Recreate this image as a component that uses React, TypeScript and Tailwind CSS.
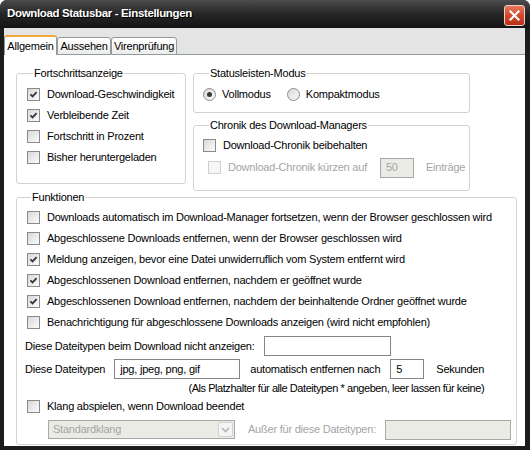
import React from 'react';

type BoxProps = { checked?: boolean; disabled?: boolean };

// 13px XP-style check box
function CheckBox({ checked, disabled }: BoxProps) {
  return (
    <span
      className={`flex h-[13px] w-[13px] shrink-0 items-center justify-center border ${
        disabled ? 'border-[#cfcfcf] bg-[#f6f6f6]' : 'border-[#8a8a8a] bg-linear-to-br from-[#d8d8d8] to-[#fcfcfc]'
      }`}
    >
      {checked && (
        <svg width="9" height="9" viewBox="0 0 9 9">
          <path d="M1.4 4.3 L3.6 6.5 L7.6 2.2" fill="none" stroke="#3a3a3a" strokeWidth="1.9" />
        </svg>
      )}
    </span>
  );
}

function Radio({ checked }: { checked?: boolean }) {
  return (
    <span className="flex h-[13px] w-[13px] shrink-0 items-center justify-center rounded-full border border-[#8a8a8a] bg-linear-to-br from-[#d8d8d8] to-[#fcfcfc]">
      {checked && <span className="h-[5px] w-[5px] rounded-full bg-[#3a3a3a]" />}
    </span>
  );
}

type RowProps = { label: string; checked?: boolean; disabled?: boolean; className?: string };

function CheckRow({ label, checked, disabled, className = '' }: RowProps) {
  return (
    <label className={`flex h-[21px] items-center gap-[7px] ${className}`}>
      <CheckBox checked={checked} disabled={disabled} />
      <span className={`whitespace-nowrap ${disabled ? 'text-[#a5a5a5]' : ''}`}>{label}</span>
    </label>
  );
}

function Group({ title, className = '', children }: { title: string; className?: string; children: React.ReactNode }) {
  return (
    <fieldset className={`rounded-[3px] border border-[#d3d3cb] ${className}`}>
      <legend className="ml-[6px] px-[1px] leading-[13px]">{title}</legend>
      {children}
    </fieldset>
  );
}

function TextBox({ value = '', disabled, className = '' }: { value?: string; disabled?: boolean; className?: string }) {
  return (
    <div
      className={`flex h-[20px] shrink-0 items-center border pl-[5px] ${
        disabled ? 'border-[#a8a8a8] bg-[#ebebe6] text-[#a5a5a5]' : 'border-[#858585] bg-white'
      } ${className}`}
    >
      {value}
    </div>
  );
}

const progress = [
  { label: 'Download-Geschwindigkeit', checked: true },
  { label: 'Verbleibende Zeit', checked: true },
  { label: 'Fortschritt in Prozent', checked: false },
  { label: 'Bisher heruntergeladen', checked: false },
];

const functions = [
  { label: 'Downloads automatisch im Download-Manager fortsetzen, wenn der Browser geschlossen wird', checked: false },
  { label: 'Abgeschlossene Downloads entfernen, wenn der Browser geschlossen wird', checked: false },
  { label: 'Meldung anzeigen, bevor eine Datei unwiderruflich vom System entfernt wird', checked: true },
  { label: 'Abgeschlossenen Download entfernen, nachdem er geöffnet wurde', checked: true },
  { label: 'Abgeschlossenen Download entfernen, nachdem der beinhaltende Ordner geöffnet wurde', checked: true },
  { label: 'Benachrichtigung für abgeschlossene Downloads anzeigen (wird nicht empfohlen)', checked: false },
];

const tabs = [
  { name: 'Allgemein', width: 'w-[53px]' },
  { name: 'Aussehen', width: 'w-[54px]' },
  { name: 'Virenprüfung', width: 'w-[66px]' },
];

export default function App() {
  return (
    <div className="flex h-[450px] w-[530px] flex-col overflow-hidden rounded-t-[7px] bg-[#1c1c1c] font-['Liberation_Sans',Arial,sans-serif] text-[11px] tracking-[-0.22px] text-black">
      {/* title bar */}
      <div className="flex h-[28px] shrink-0 items-center justify-between bg-linear-to-b from-[#4c4c4c] via-[#262626] to-[#141414] pl-[7px] pr-[5px]">
        <span className="text-[11.5px] font-bold tracking-[-0.35px] text-white [text-shadow:1px_1px_0_#000]">
          Download Statusbar - Einstellungen
        </span>
        <button className="mt-[2px] flex h-[21px] w-[21px] items-center justify-center rounded-[3px] border border-[#e8d0c8] bg-linear-to-b from-[#e8765a] via-[#d4482a] to-[#b83218]">
          <svg width="11" height="11" viewBox="0 0 11 11">
            <path d="M1.5 1.5 L9.5 9.5 M9.5 1.5 L1.5 9.5" stroke="#fff" strokeWidth="2.2" strokeLinecap="square" />
          </svg>
        </button>
      </div>

      <div className="mb-[4px] ml-[4px] mr-[5px] flex flex-1 flex-col bg-[#e4e4e4]">
        {/* tabs */}
        <div className="flex h-[27px] shrink-0 items-end">
          {tabs.map((t, i) =>
            i === 0 ? (
              <div
                key={t.name}
                className={`flex h-[20px] ${t.width} items-center justify-center rounded-t-[3px] border border-b-0 border-[#919b9c] border-t-2 border-t-[#f2a83a] bg-white`}
              >
                {t.name}
              </div>
            ) : (
              <div
                key={t.name}
                className={`flex h-[18px] ${t.width} items-center justify-center rounded-t-[3px] border border-[#919b9c] bg-linear-to-b from-white to-[#ececec]`}
              >
                {t.name}
              </div>
            )
          )}
          <div className="flex-1 border-b border-[#919b9c]" />
        </div>

        {/* panel */}
        <div className="flex-1 bg-white pl-[12px] pr-[8px] pt-[12px]">
          <div className="flex gap-[7px]">
            <Group title="Fortschrittsanzeige" className="h-[117px] w-[170px] pl-[10px] pt-[4px]">
              {progress.map((p) => (
                <CheckRow key={p.label} label={p.label} checked={p.checked} />
              ))}
            </Group>
            <div className="flex w-[277px] flex-col gap-[6px]">
              <Group title="Statusleisten-Modus" className="h-[46px] pl-[9px] pt-[4px]">
                <div className="flex h-[21px] items-center">
                  <label className="flex items-center gap-[6px]">
                    <Radio checked />
                    <span>Vollmodus</span>
                  </label>
                  <label className="ml-[16px] flex items-center gap-[6px]">
                    <Radio />
                    <span>Kompaktmodus</span>
                  </label>
                </div>
              </Group>
              <Group title="Chronik des Download-Managers" className="h-[72px] pl-[9px] pt-[3px]">
                <CheckRow label="Download-Chronik beibehalten" />
                <div className="mt-[1px] flex h-[21px] items-center pl-[5px]">
                  <CheckRow label="Download-Chronik kürzen auf" disabled />
                  <TextBox value="50" disabled className="ml-[13px] w-[34px]" />
                  <span className="ml-[12px] text-[#a5a5a5]">Einträge</span>
                </div>
              </Group>
            </div>
          </div>

          <Group title="Funktionen" className="pb-[5px] pl-[8px] pt-[3px]">
            {functions.map((f) => (
              <CheckRow key={f.label} label={f.label} checked={f.checked} className="pl-[2px]" />
            ))}
            <div className="mt-[3px] flex h-[20px] items-center">
              <span className="whitespace-nowrap">Diese Dateitypen beim Download nicht anzeigen:</span>
              <TextBox className="ml-[9px] w-[127px]" />
            </div>
            <div className="mt-[3px] flex w-fit flex-col items-end">
              <div className="flex h-[20px] items-center">
                <span className="whitespace-nowrap">Diese Dateitypen</span>
                <TextBox value="jpg, jpeg, png, gif" className="ml-[9px] w-[126px]" />
                <span className="ml-[10px] whitespace-nowrap">automatisch entfernen nach</span>
                <TextBox value="5" className="ml-[10px] w-[34px]" />
                <span className="ml-[12px]">Sekunden</span>
              </div>
              <div className="mt-[2px] h-[14px] whitespace-nowrap leading-[14px] tracking-[-0.45px]">
                (Als Platzhalter für alle Dateitypen * angeben, leer lassen für keine)
              </div>
            </div>
            <CheckRow label="Klang abspielen, wenn Download beendet" className="mt-[1px] pl-[2px]" />
            <div className="mt-[3px] flex h-[19px] items-center pl-[23px] pr-[5px]">
              <div className="flex h-[19px] w-[187px] items-center justify-between border border-[#a8a8a8] bg-[#ebebe6] pl-[4px] pr-[1px] text-[#a5a5a5]">
                <span>Standardklang</span>
                <span className="flex h-[15px] w-[15px] items-center justify-center rounded-[2px] border border-[#d2d2d2] bg-[#f4f4f4]">
                  <svg width="9" height="6" viewBox="0 0 9 6">
                    <path d="M1 1 L4.5 4.5 L8 1" fill="none" stroke="#b4b4b4" strokeWidth="1.6" />
                  </svg>
                </span>
              </div>
              <span className="ml-[13px] whitespace-nowrap text-[#a5a5a5]">Außer für diese Dateitypen:</span>
              <TextBox disabled className="ml-auto h-[19px] w-[126px]" />
            </div>
          </Group>
        </div>
      </div>
    </div>
  );
}
